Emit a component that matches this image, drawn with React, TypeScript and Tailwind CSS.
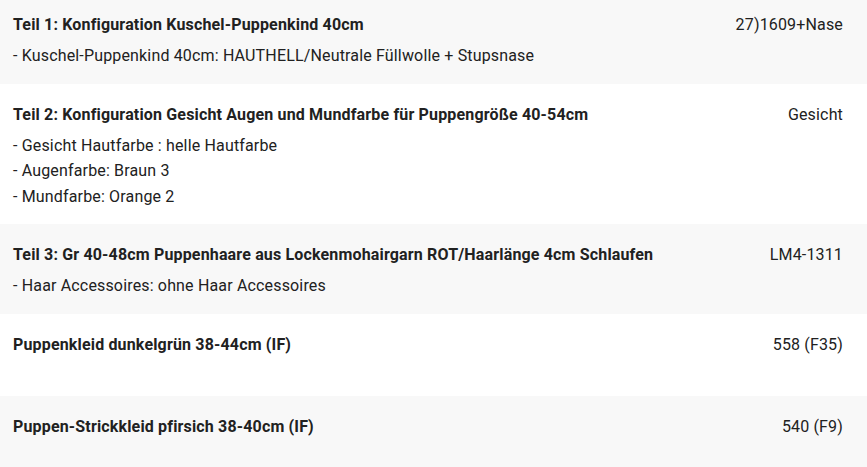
type Part = {
  title: string;
  lines: string[];
  code: string;
};

const PARTS: Part[] = [
  {
    title: 'Teil 1: Konfiguration Kuschel-Puppenkind 40cm',
    lines: ['- Kuschel-Puppenkind 40cm: HAUTHELL/Neutrale Füllwolle + Stupsnase'],
    code: '27)1609+Nase',
  },
  {
    title: 'Teil 2: Konfiguration Gesicht Augen und Mundfarbe für Puppengröße 40-54cm',
    lines: ['- Gesicht Hautfarbe : helle Hautfarbe', '- Augenfarbe: Braun 3', '- Mundfarbe: Orange 2'],
    code: 'Gesicht',
  },
  {
    title: 'Teil 3: Gr 40-48cm Puppenhaare aus Lockenmohairgarn ROT/Haarlänge 4cm Schlaufen',
    lines: ['- Haar Accessoires: ohne Haar Accessoires'],
    code: 'LM4-1311',
  },
  { title: 'Puppenkleid dunkelgrün 38-44cm (IF)', lines: [], code: '558 (F35)' },
  { title: 'Puppen-Strickkleid pfirsich 38-40cm (IF)', lines: [], code: '540 (F9)' },
];

export default function App() {
  return (
    <div
      className="h-[467px] w-[867px] overflow-hidden bg-white text-[16px] tracking-[0.16px] text-[#212121]"
      style={{ fontFamily: 'Roboto, "Liberation Sans", sans-serif' }}
    >
      {/* list is scrolled a few pixels, first row starts above the top edge */}
      <div className="-mt-[6px]">
        {PARTS.map((part, i) => (
          <div
            key={part.title}
            className={`flex min-h-[82px] justify-between pb-[15px] pl-[13px] pr-[24px] pt-[20px] ${
              i % 2 === 0 ? 'bg-[#f8f8f8]' : 'bg-white'
            }`}
          >
            <div>
              <div className="font-bold leading-[22px]">{part.title}</div>
              {part.lines.length > 0 && (
                <div className="mt-[7px]">
                  {part.lines.map((line) => (
                    <div key={line} className="leading-[25.5px]">
                      {line}
                    </div>
                  ))}
                </div>
              )}
            </div>
            <div className="leading-[22px]">{part.code}</div>
          </div>
        ))}
      </div>
    </div>
  );
}
